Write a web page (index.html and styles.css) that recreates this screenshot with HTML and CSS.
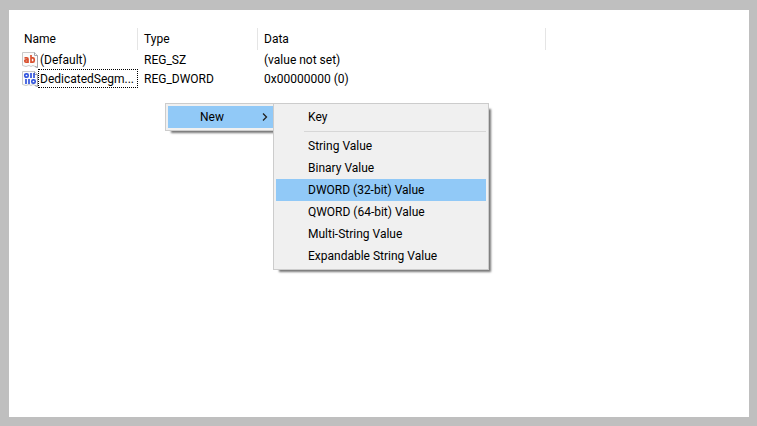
FILE: index.html
```
<!DOCTYPE html>
<html lang="en">
<head>
    <meta charset="UTF-8">
    <meta name="viewport" content="width=device-width, initial-scale=1.0">
    <title>Registry Editor</title>
    <link rel="stylesheet" href="styles.css">
</head>
<body>
    <main class="pane">
        <table class="values">
            <thead>
                <tr>
                    <th class="col-name">Name</th>
                    <th class="col-type">Type</th>
                    <th class="col-data">Data</th>
                </tr>
            </thead>
            <tbody>
                <tr>
                    <td>
                        <div class="value-name">
                            <svg class="icon" viewBox="0 0 16 16" aria-hidden="true">
                                <path d="M.5 .5H12.5L15.5 3.5V15.5L13 14.5L11 13.5L9 14.5L7 13.5L4 14.5L.5 13.5Z" fill="#fbfbfb" stroke="#c9c9c9"/>
                                <path d="M12.5 .5V3.5H15.5V15.5L13 14.5" fill="none" stroke="#a3a3aa"/>
                                <g fill="none" stroke="#d9502f" stroke-width="1.7">
                                    <path d="M2.500 5.800H4.800Q6 5.800 6 7V11M6 7.900H4Q2.800 7.900 2.800 9.100Q2.800 10.200 4 10.200H6"/>
                                    <path d="M9 3V11M9 5.800H10.800Q12.200 5.800 12.200 7.200V8.800Q12.200 10.200 10.800 10.200H9"/>
                                </g>
                            </svg>
                            <span class="label">(Default)</span>
                        </div>
                    </td>
                    <td>REG_SZ</td>
                    <td>(value not set)</td>
                </tr>
                <tr>
                    <td>
                        <div class="value-name">
                            <svg class="icon" viewBox="0 0 16 16" aria-hidden="true">
                                <path d="M.5 .5H12.5L15.5 3.5V15.5L13 14.5L11 13.5L9 14.5L7 13.5L4 14.5L.5 13.5Z" fill="#fbfbfb" stroke="#c9c9c9"/>
                                <path d="M12.5 .5V3.5H15.5V15.5L13 14.5" fill="none" stroke="#a3a3aa"/>
                                <g fill="none" stroke="#3355dd" stroke-width="1.7">
                                    <rect x="2.8" y="2.8" width="3.400" height="3.400" rx="1.4"/>
                                    <path d="M9 2V7M12 2V7M4 8V13M7 8V13"/>
                                    <rect x="9.8" y="8.8" width="3.400" height="3.400" rx="1.4"/>
                                </g>
                            </svg>
                            <span class="label focused">DedicatedSegm...</span>
                        </div>
                    </td>
                    <td>REG_DWORD</td>
                    <td>0x00000000 (0)</td>
                </tr>
            </tbody>
        </table>

        <div class="menu context-menu">
            <button type="button" class="item selected">
                New
                <svg class="arrow" viewBox="0 0 6 8" aria-hidden="true">
                    <path d="M1 .5L4.500 4L1 7.500" fill="none" stroke="#222" stroke-width="1.3"/>
                </svg>
            </button>
            <div class="menu submenu">
                <button type="button" class="item">Key</button>
                <hr>
                <button type="button" class="item">String Value</button>
                <button type="button" class="item">Binary Value</button>
                <button type="button" class="item selected">DWORD (32-bit) Value</button>
                <button type="button" class="item">QWORD (64-bit) Value</button>
                <button type="button" class="item">Multi-String Value</button>
                <button type="button" class="item">Expandable String Value</button>
            </div>
        </div>
    </main>
</body>
</html>
```
FILE: styles.css
```
*, *::before, *::after {
    box-sizing: border-box;
}
body {
    margin: 0;
    padding: 10px 8px 9px 9px;
    min-height: 100vh;
    display: flex;
    background: #bfbfbf;
    color: #000;
    font-family: "Segoe UI", Roboto, sans-serif;
    font-size: 12px;
    line-height: 18px;
}
.pane {
    position: relative;
    flex: 1;
    min-width: 0;
    padding: 18px 9px;
    background: #fff;
}

/* value list */
.values {
    table-layout: fixed;
    width: 528px;
    border-collapse: separate;
    border-spacing: 0;
}
.values th,
.values td {
    padding: 0 0 0 6px;
    text-align: left;
    font-weight: normal;
    white-space: nowrap;
}
.values th {
    height: 22px;
    border-right: 1px solid #e5e5e5;
}
.values td {
    height: 19px;
}
.values td:first-child {
    padding-left: 4px;
}
.col-name,
.col-type {
    width: 120px;
}
.value-name {
    display: flex;
    align-items: center;
}
.icon {
    flex: none;
    width: 16px;
    height: 16px;
}
.label {
    padding: 0 2px;
    height: 19px;
    line-height: 20px;
}
.focused {
    flex: 1;
    padding: 0 1px;
    border: 1px dotted #000;
    line-height: 18px;
}

/* context menu */
.menu {
    position: absolute;
    padding: 2px;
    background: #f0f0f0;
    border: 1px solid #ccc;
    box-shadow: 4px 4px 2px -2px #777;
}
.context-menu {
    top: 93px;
    left: 156px;
    width: 111px;
}
.submenu {
    top: -1px;
    left: 107px;
    width: 216px;
}
.item {
    display: flex;
    align-items: center;
    justify-content: space-between;
    width: 100%;
    height: 22px;
    padding: 0 5px 0 32px;
    border: 0;
    background: none;
    color: inherit;
    font: inherit;
    text-align: left;
    white-space: nowrap;
}
.selected {
    background: #91c9f7;
}
.arrow {
    width: 6px;
    height: 8px;
}
.submenu hr {
    height: 1px;
    margin: 3px 0 3px 28px;
    border: 0;
    background: #d7d7d7;
}
```
